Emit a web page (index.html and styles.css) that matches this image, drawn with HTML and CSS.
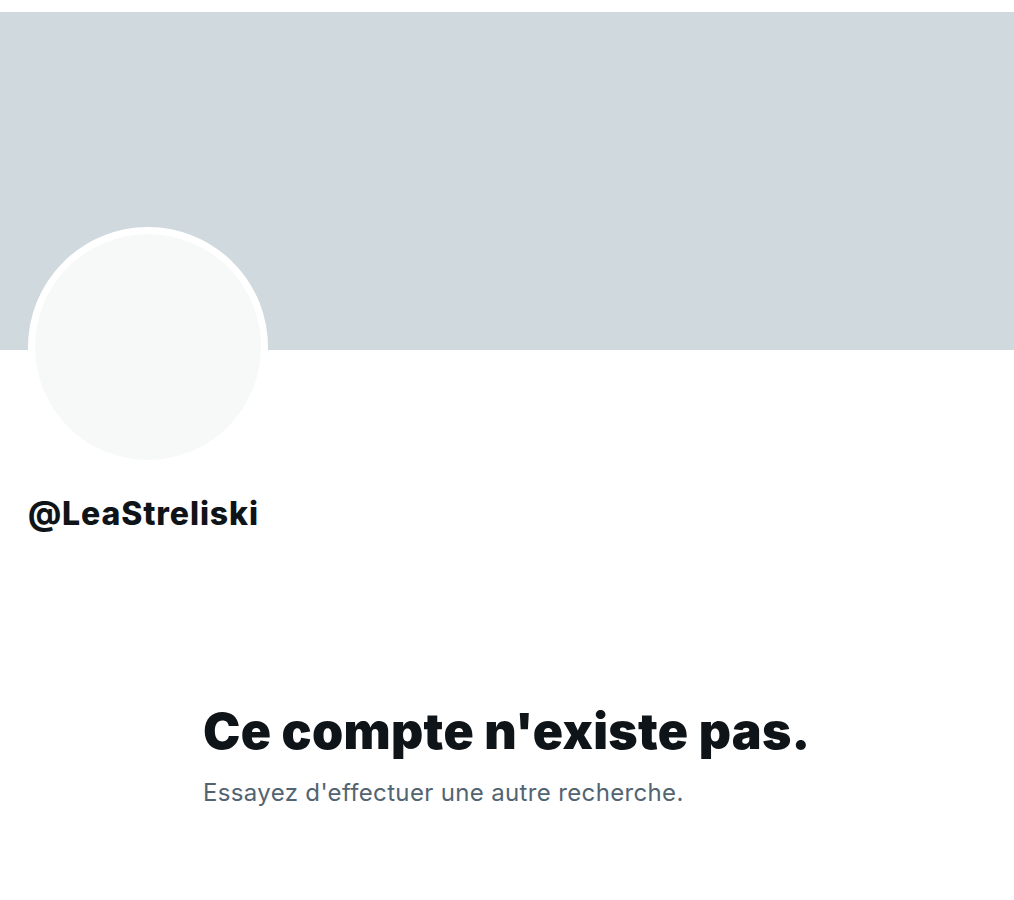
FILE: index.html
```html
<!DOCTYPE html>
<html lang="fr">
<head>
  <meta charset="utf-8">
  <title>@LeaStreliski</title>
  <meta name="viewport" content="width=device-width, initial-scale=1">
  <link rel="stylesheet" href="styles.css">
</head>
<body>

<!-- profile header -->
<div class="profile">
  <div class="banner"></div>
  <div class="avatar"></div>
  <div class="handle">@LeaStreliski</div>
</div>

<!-- empty state -->
<div class="empty">
  <h1>Ce compte n'existe pas.</h1>
  <p>Essayez d'effectuer une autre recherche.</p>
</div>

</body>
</html>
```

FILE: styles.css
```css
body {
  margin: 0;
  font-family: Inter, "Noto Sans", sans-serif;
  color: #0f1419;
  background: #fff;
}

.profile {
  padding-top: 12px;
}

.banner {
  height: 338px;
  background-color: #cfd9de;
}

.avatar {
  width: 226px;
  height: 226px;
  margin: -123px 0 0 28px;
  border: 7px solid #fff;
  border-radius: 50%;
  background-color: #f7f9f9;
}

.handle {
  margin: 27px 0 0 28px;
  font-size: 32px;
  font-weight: 800;
  line-height: 40px;
  letter-spacing: 0.9px;
}

.empty {
  width: 608px;
  margin: 167px auto 0;
}

.empty h1 {
  margin: 0;
  font-size: 50px;
  font-weight: 900;
  line-height: 60px;
  letter-spacing: 0.3px;
}

.empty p {
  margin: 16px 0 0;
  font-size: 24px;
  line-height: 32px;
  letter-spacing: 0.35px;
  color: #536471;
}
```
